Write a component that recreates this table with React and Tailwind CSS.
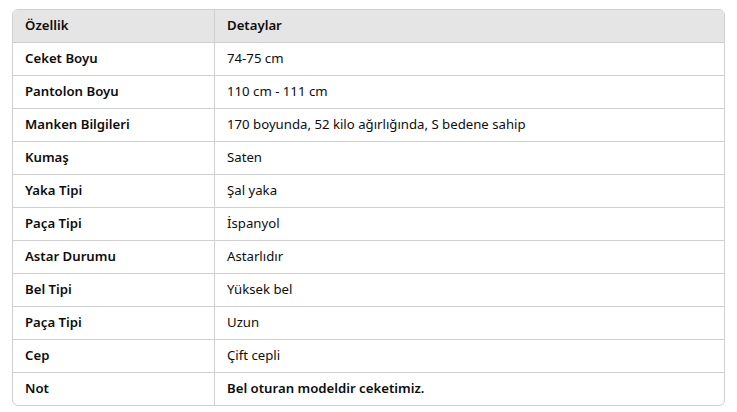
const rows = [
  ["Ceket Boyu", "74-75 cm"],
  ["Pantolon Boyu", "110 cm - 111 cm"],
  ["Manken Bilgileri", "170 boyunda, 52 kilo ağırlığında, S bedene sahip"],
  ["Kumaş", "Saten"],
  ["Yaka Tipi", "Şal yaka"],
  ["Paça Tipi", "İspanyol"],
  ["Astar Durumu", "Astarlıdır"],
  ["Bel Tipi", "Yüksek bel"],
  ["Paça Tipi", "Uzun"],
  ["Cep", "Çift cepli"],
  ["Not", "Bel oturan modeldir ceketimiz.", true],
];

function Row({ left, right, bold, header, last }) {
  return (
    <div
      className={`grid grid-cols-[202px_1fr] ${last ? "h-[32px]" : "h-[33px] border-b border-[#d0d0d0]"} ${header ? "bg-[#e5e5e5]" : ""}`}
    >
      <div className="flex items-center border-r border-[#d0d0d0] px-3 font-semibold">{left}</div>
      <div className={`flex items-center px-3 ${bold || header ? "font-semibold" : ""}`}>{right}</div>
    </div>
  );
}

export default function App() {
  return (
    <div className="min-h-screen bg-white px-3 pt-[9px] font-['Noto_Sans',sans-serif] text-[13.2px] text-[#0d0d0d]">
      <div className="overflow-hidden rounded-md border border-[#d0d0d0]">
        <Row left="Özellik" right="Detaylar" header />
        {rows.map(([k, v, bold], i) => (
          <Row key={i} left={k} right={v} bold={bold} last={i === rows.length - 1} />
        ))}
      </div>
    </div>
  );
}
